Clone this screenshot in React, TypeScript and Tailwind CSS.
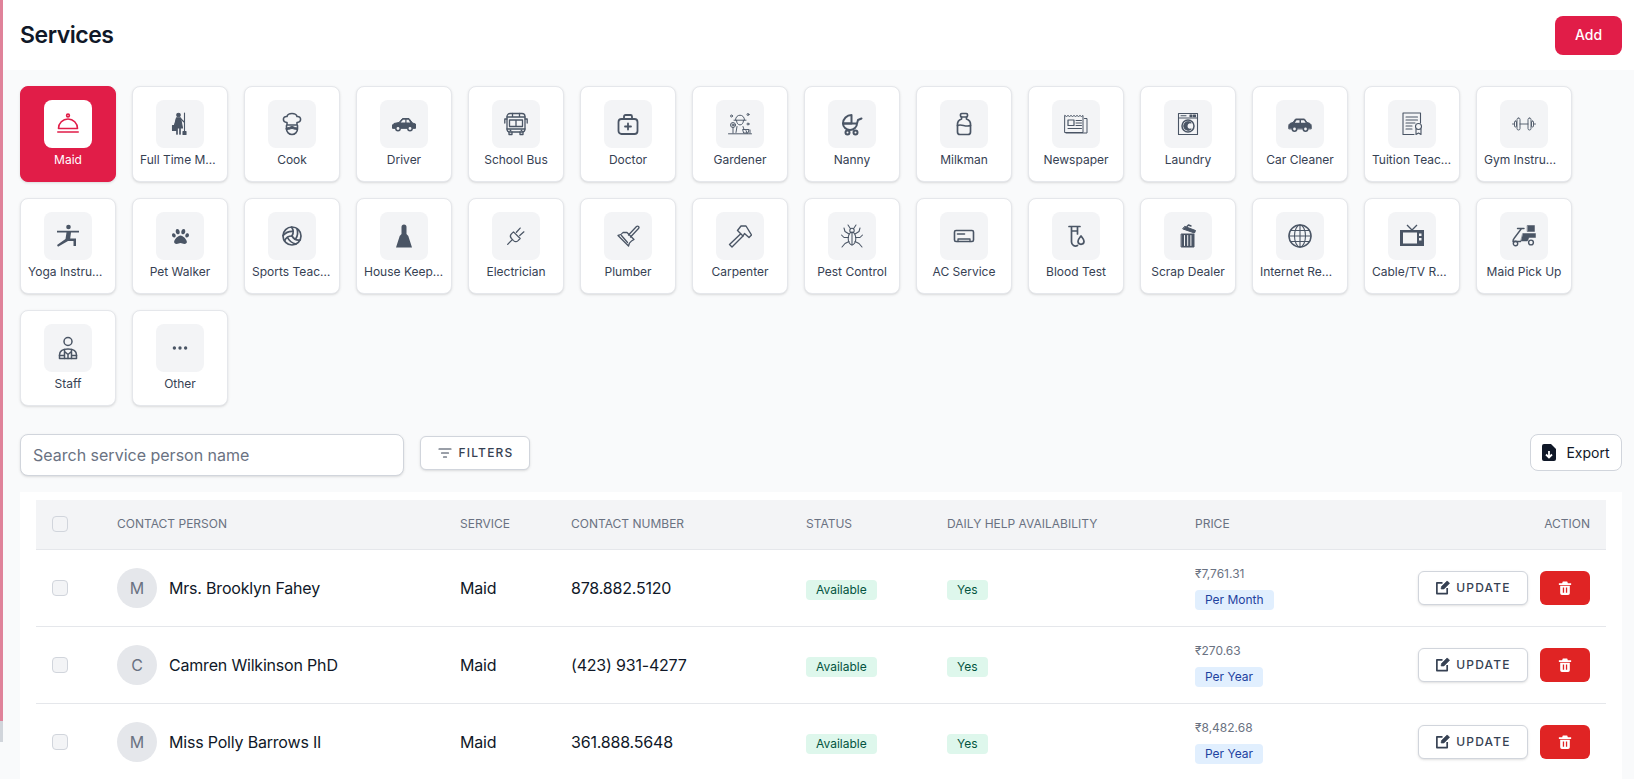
import React from "react";
import clsx from "clsx";
import { BsThreeDots } from "react-icons/bs";
import { FaPaw } from "react-icons/fa";
import { TbBallVolleyball } from "react-icons/tb";

type IconProps = { children: React.ReactNode; stroke?: number };

// hand-drawn icons, all on a 24 box
const Svg = ({ children, stroke = 1.5 }: IconProps) => (
  <svg width="24" height="24" viewBox="0 0 24 24" fill="none" stroke="currentColor" strokeWidth={stroke} strokeLinecap="round" strokeLinejoin="round">
    {children}
  </svg>
);

const Cloche = () => (
  <Svg stroke={1.6}>
    <circle cx="12" cy="3.500" r="1.400" />
    <path d="M2.500 16.500a9.500 9.500 0 0 1 19 0z" />
    <path d="M1.800 20h20.400" />
  </Svg>
);

const MaidFigure = () => (
  <Svg stroke={1.1}>
    <circle cx="10.500" cy="3" r="1.800" fill="currentColor" />
    <path d="M8.500 5.800h4L14.500 16h-8z" fill="currentColor" />
    <path d="M9 16v6M12 16v6" strokeWidth="1.700" />
    <path d="M8.500 6.500L6.500 13M12.500 6.500L16 10M16.500 1v18" />
    <rect x="4.500" y="13.500" width="4" height="5" fill="currentColor" />
    <path d="M15 19.500h3V22.500h-3z" fill="currentColor" />
  </Svg>
);

const ChefFace = () => (
  <Svg stroke={1.600}>
    <path d="M7 10.500C2 10 2.500 4 7 4.500 8 .5 16 .5 17 4.500c4.500-.5 5 5.500 0 6v2.500H7z" />
    <path d="M6.500 13.500V17a5.500 5.500 0 0 0 11 0v-3.500" />
    <path d="M6.500 16c2.500 0 4-1.500 5.500-1.500s3 1.500 5.500 1.500v1.500c-3.500 0-4-1-5.500-1s-2 1-5.500 1z" fill="currentColor" strokeWidth="1" />
  </Svg>
);

const CarWindow = () => (
  <Svg stroke={1}>
    <path d="M.5 16v-3l1.500-1.500 5-1 3.500-4h6.500l3.500 4.500 3 1V16z" fill="currentColor" />
    <path d="M11 7.800h2.300v2.700H8.600zM14.500 7.800h2l1.700 2.700h-3.700z" fill="#f3f4f6" stroke="none" />
    <circle cx="6" cy="16.500" r="2.200" fill="#f3f4f6" strokeWidth="1.500" />
    <circle cx="18" cy="16.500" r="2.200" fill="#f3f4f6" strokeWidth="1.500" />
  </Svg>
);

const SchoolBus = () => (
  <Svg stroke={1.300}>
    <rect x="3" y="1.500" width="18" height="18.500" rx="3" />
    <path d="M8.500 1.500V5h7V1.500M3 5h18M5.500 8h13v6.500h-13zM3 17h18M12 8v6.500" />
    <path d="M5 20v2.500h3V20M16 20v2.500h3V20M3 7H.8v4M21 7h2.200v4" />
    <path d="M6.500 18.500h.01M17.500 18.500h.01" strokeWidth="1.800" />
  </Svg>
);

const MedicalCase = () => (
  <Svg stroke={1.800}>
    <rect x="2.500" y="7" width="19" height="15" rx="3" />
    <path d="M8 7V4.500A1.500 1.500 0 0 1 9.500 3h5A1.500 1.500 0 0 1 16 4.500V7M12 11.500v6M9 14.500h6" />
  </Svg>
);

const Gardener = () => (
  <Svg stroke={0.95}>
    <path d="M7.500 8c0-6.500 9-6.500 9 0M6 8.200h12" />
    <path d="M8.500 8.500c0 6 7 6 7 0" />
    <path d="M9 14.500l-1 6M15 14.500l1 3" />
    <circle cx="5" cy="13" r="2.500" />
    <circle cx="5" cy="13" r="1" />
    <path d="M5 15.500v5.500M15 17.500h6l-1 3.500h-4zM.5 21.800h23" />
    <circle cx="3.500" cy="4" r="1" />
    <circle cx="20" cy="2.500" r="1" />
    <circle cx="20" cy="12" r="1" />
    <path d="M19 21l-1-2.500M22 21v-3" />
  </Svg>
);

const Stroller = () => (
  <Svg stroke={2}>
    <path d="M3 11.500A8.500 8.500 0 0 1 11.500 3v8.500z" />
    <path d="M3 11.500h14a7 6.500 0 0 1-14 0zM17 11.500l1-3.500 3.500-1.500" />
    <circle cx="7.500" cy="20.500" r="2" />
    <circle cx="15.500" cy="20.500" r="2" />
  </Svg>
);

const MilkBottle = () => (
  <Svg stroke={1.700}>
    <rect x="8.500" y="1.500" width="7" height="3.500" rx="1.200" />
    <path d="M9.500 5v2C7 8 5.500 9.500 5.500 12v8a2.500 2.500 0 0 0 2.500 2.500h8a2.500 2.500 0 0 0 2.500-2.500v-8c0-2.500-1.500-4-4-5V5" />
    <path d="M5.500 13.500c4-2 8 2 13 0" />
  </Svg>
);

const NewspaperIcon = () => (
  <Svg stroke={1}>
    <path d="M1 3.500l1.500 1 1.500-1 1.500 1 1.500-1 1.500 1 1.500-1 1.500 1 1.500-1 1.500 1 1.500-1 1.500 1 1.500-1V20.500H1z" />
    <path d="M20.500 6.500H23v14.500H2" />
    <rect x="4" y="8" width="6" height="5.500" strokeWidth="1.200" />
    <path d="M12 8.500h5.500M12 11h5.500M12 13.500h5.500M4 16.500h13.500" />
  </Svg>
);

const Washer = () => (
  <Svg stroke={1.100}>
    <rect x="2.500" y="1.500" width="19" height="21" />
    <path d="M2.500 6h19M5 3.800h5" />
    <rect x="14" y="3" width="2" height="1.600" fill="currentColor" />
    <rect x="17.500" y="3" width="2" height="1.600" fill="currentColor" />
    <circle cx="12" cy="14" r="6" strokeWidth="1.500" />
    <path d="M15 11a4.200 4.200 0 1 0 0 6 2.800 2.800 0 0 1-4-3 3 3 0 0 1 4-3z" fill="currentColor" />
  </Svg>
);

const CarSmall = () => (
  <Svg stroke={1}>
    <path d="M.8 16.500v-3c0-1.500 1.500-2.500 4.200-3l2.500-3.500h9l2.500 3.500c2.700.5 4.200 1.500 4.200 3v3z" fill="currentColor" />
    <path d="M8.500 8.300h3v2.400H6.800zM13 8.300h3l1.700 2.400H13z" fill="#f3f4f6" stroke="none" />
    <circle cx="6.500" cy="17" r="2.200" fill="#f3f4f6" strokeWidth="1.600" />
    <circle cx="17.500" cy="17" r="2.200" fill="#f3f4f6" strokeWidth="1.600" />
  </Svg>
);

const Certificate = () => (
  <Svg stroke={1.100}>
    <path d="M14 22.500H3V1h17.500v10" />
    <path d="M6 5h11.500M6 8h11.500M6 11h9M6 14h6M6 17h6" />
    <circle cx="18.500" cy="14.500" r="3" />
    <path d="M16 17v5.500l2.500-1.500 2.500 1.500V17" />
  </Svg>
);

const Barbell = () => (
  <Svg stroke={0.9}>
    <path d="M8 12h8M.5 12H2M22 12h1.500" />
    <rect x="2.500" y="9" width="2" height="6" rx="1" />
    <rect x="5" y="6" width="3" height="12" rx="1.500" />
    <rect x="16" y="6" width="3" height="12" rx="1.500" />
    <rect x="19.500" y="9" width="2" height="6" rx="1" />
  </Svg>
);

const Warrior = () => (
  <svg width="24" height="24" viewBox="0 0 24 24" fill="currentColor">
    <circle cx="12.500" cy="3" r="2.300" />
    <path d="M1 6.800h22v1.800h-8l-.8 6H20V22h-2.500v-5H12L2 22.800l-1-1.800 8.500-6 1-6.400H1z" />
  </svg>
);

const Broom = () => (
  <svg width="24" height="24" viewBox="0 0 24 24" fill="currentColor">
    <path d="M9.500 3a2.500 2.500 0 0 1 5 0v7l1.800 2L20 23.500H4L7.700 12l1.800-2z" />
  </svg>
);

const PlugIcon = () => (
  <svg width="20" height="20" viewBox="0 0 24 24" fill="none" stroke="currentColor" strokeWidth="1.500" strokeLinecap="round" strokeLinejoin="round">
    <path d="M9 7l8 8-2.500 2.500a4 4 0 0 1-5.500 0L6.500 15a4 4 0 0 1 0-5.500z" />
    <path d="M7 17l-5 5M12.500 7.500L17 2.500M16.500 11.500L21.500 7" />
  </svg>
);

const Plunger = () => (
  <Svg stroke={1.300}>
    <path d="M12.500 11l8-8.500a1.400 1.400 0 0 1 2 2l-8 8.500" />
    <path d="M11 8.500l7 7-2.500 1.500c-1.500 1-2.500 2.500-3 5L2 11.500c2.500-.5 4-1.500 5-3z" />
    <path d="M5.500 11.500l6 7" />
  </Svg>
);

const HammerOutline = () => (
  <Svg stroke={1.400}>
    <path d="M12.500 10L1.500 20.500l2.500 2.500 11-11" />
    <path d="M9.500 6.500L13 2h5l5.500 9-2.500 2.500-4.500-4-1.500 2.500-5.500-5.500z" />
  </Svg>
);

const Insect = () => (
  <Svg stroke={1.050}>
    <ellipse cx="12" cy="14.500" rx="3.800" ry="6.500" />
    <circle cx="12" cy="6.500" r="2.200" />
    <path d="M12 9v12M10.500 4.800L8 1M13.500 4.800L16 1M9 10L5 7.500l-1-3.500M15 10l4-2.500 1-3.500M8.500 13.500H4L1.500 11M15.500 13.500H20l2.500-2.500M9 17.500l-4 2-3 3.500M15 17.500l4 2 3 3.500" />
  </Svg>
);

const AcUnit = () => (
  <Svg stroke={1.600}>
    <rect x="2.500" y="6.500" width="19" height="11" rx="1.500" />
    <path d="M5.500 10h7" />
    <path d="M6 17.500v-2.500h12v2.500" strokeWidth="1.300" />
  </Svg>
);

const TestTube = () => (
  <Svg stroke={1.700}>
    <path d="M5 2.500h11M7.500 2.500V18a4 4 0 0 0 6 3.500M13.500 2.500V10M7.500 7h6" />
    <path d="M17 12c1.500 2 3 3.200 3 5.300a3 3 0 0 1-6 0c0-2.100 1.500-3.300 3-5.300z" />
  </Svg>
);

const ScrapBin = () => (
  <Svg stroke={1}>
    <path d="M5.500 10h12.500v13H5.500z" fill="currentColor" />
    <path d="M8.500 11.500v10M11.700 11.500v10M14.900 11.500v10" stroke="#f3f4f6" />
    <path d="M7 5l11.500 4 1-2.500L9 2.500z" fill="currentColor" />
    <path d="M11 2.500l1.500-1.500 2.500 1" strokeWidth="1.500" />
  </Svg>
);

const GlobeGrid = () => (
  <Svg stroke={1.100}>
    <circle cx="12" cy="12" r="11" strokeWidth="1.500" />
    <ellipse cx="12" cy="12" rx="5.500" ry="11" />
    <path d="M12 1v22M1 12h22M2.500 6.500h19M2.500 17.500h19" />
  </Svg>
);

const Television = () => (
  <svg width="24" height="24" viewBox="0 0 24 24" fill="currentColor">
    <path d="M7 1l5 5 5-5" fill="none" stroke="currentColor" strokeWidth="1.300" />
    <path fillRule="evenodd" d="M0 6h24v16H0zM3 8.500V19.500h14V8.500zM19 9.500v2.500h2.500V9.500zM19 14v2.500h2.500V14z" />
  </svg>
);

const Scooter = () => (
  <Svg stroke={1.400}>
    <path d="M15.500 1.500h7v6h-7z" fill="currentColor" strokeWidth="0.500" />
    <path d="M11 9.500h12.500v4H17l-1.500 3.500H9z" fill="currentColor" strokeWidth="0.500" />
    <path d="M5.500 4.500H12M9.500 4.500L2 14.500c-.8 1-1 2-1 3h7.500" />
    <circle cx="3.500" cy="19.500" r="2.200" />
    <circle cx="19" cy="18.500" r="2.400" fill="#f3f4f6" />
  </Svg>
);

const StaffPerson = () => (
  <Svg stroke={1.500}>
    <circle cx="12" cy="5.500" r="4" />
    <path d="M3.500 22.500v-3.500c0-4 3.500-6 8.500-6s8.500 2 8.500 6v3.500z" />
    <path d="M8.500 13.500v9M15.500 13.500v9M8.500 15.500l3.500 3 3.500-3M12 18.500v4M3.500 19.500h5M15.500 19.500h5" />
  </Svg>
);

const FilterLines = () => (
  <svg width="16" height="16" viewBox="0 0 16 16" fill="none" stroke="currentColor" strokeWidth="1.200" strokeLinecap="round">
    <path d="M2 4h12M4.500 8h7M6.500 12h3" />
  </svg>
);

const ExportDoc = () => (
  <svg width="14" height="17" viewBox="0 0 14 17" className="text-gray-900">
    <path d="M2 0h7l5 5v10a2 2 0 0 1-2 2H2a2 2 0 0 1-2-2V2a2 2 0 0 1 2-2z" fill="currentColor" />
    <path d="M7 7v6M4 10.500l3 3 3-3" fill="none" stroke="#fff" strokeWidth="1.800" />
  </svg>
);

const EditSquare = () => (
  <svg width="15" height="15" viewBox="0 0 16 16" fill="none" stroke="currentColor" strokeWidth="1.800" strokeLinejoin="round">
    <path d="M8 3H2v11.500h11V8.500" />
    <path d="M6.500 9.500L7 7l6-6 2.500 2.500-6 6z" fill="currentColor" strokeWidth="0.800" />
  </svg>
);

const BinFilled = () => (
  <svg width="14" height="14" viewBox="0 0 16 16" fill="currentColor">
    <path fillRule="evenodd" d="M5.500 .5h5L11.300 2.500H15V4.500H1V2.500h3.700zM2.500 5.500h11V14a2 2 0 0 1-2 2h-7a2 2 0 0 1-2-2zM5.500 7.500v6h1.500v-6zM9 7.500v6h1.500v-6z" />
  </svg>
);

const services: { name: string; icon: React.ReactNode }[] = [
  { name: "Maid", icon: <Cloche /> },
  { name: "Full Time M…", icon: <MaidFigure /> },
  { name: "Cook", icon: <ChefFace /> },
  { name: "Driver", icon: <CarWindow /> },
  { name: "School Bus", icon: <SchoolBus /> },
  { name: "Doctor", icon: <MedicalCase /> },
  { name: "Gardener", icon: <Gardener /> },
  { name: "Nanny", icon: <Stroller /> },
  { name: "Milkman", icon: <MilkBottle /> },
  { name: "Newspaper", icon: <NewspaperIcon /> },
  { name: "Laundry", icon: <Washer /> },
  { name: "Car Cleaner", icon: <CarSmall /> },
  { name: "Tuition Teac…", icon: <Certificate /> },
  { name: "Gym Instru…", icon: <Barbell /> },
  { name: "Yoga Instru…", icon: <Warrior /> },
  { name: "Pet Walker", icon: <FaPaw size={17} /> },
  { name: "Sports Teac…", icon: <TbBallVolleyball size={24} strokeWidth={1.700} /> },
  { name: "House Keep…", icon: <Broom /> },
  { name: "Electrician", icon: <PlugIcon /> },
  { name: "Plumber", icon: <Plunger /> },
  { name: "Carpenter", icon: <HammerOutline /> },
  { name: "Pest Control", icon: <Insect /> },
  { name: "AC Service", icon: <AcUnit /> },
  { name: "Blood Test", icon: <TestTube /> },
  { name: "Scrap Dealer", icon: <ScrapBin /> },
  { name: "Internet Re…", icon: <GlobeGrid /> },
  { name: "Cable/TV R…", icon: <Television /> },
  { name: "Maid Pick Up", icon: <Scooter /> },
  { name: "Staff", icon: <StaffPerson /> },
  { name: "Other", icon: <BsThreeDots size={18} /> },
];

const people = [
  { name: "Mrs. Brooklyn Fahey", phone: "878.882.5120", price: "₹7,761.31", per: "Per Month" },
  { name: "Camren Wilkinson PhD", phone: "(423) 931-4277", price: "₹270.63", per: "Per Year" },
  { name: "Miss Polly Barrows II", phone: "361.888.5648", price: "₹8,482.68", per: "Per Year" },
];

const ServiceCard = ({ name, icon, active }: { name: string; icon: React.ReactNode; active: boolean }) => (
  <div
    className={clsx(
      "w-24 h-24 rounded-lg border shadow-sm flex flex-col items-center pt-[13px]",
      active ? "bg-[#e11d48] border-[#e11d48]" : "bg-white border-gray-200",
    )}
  >
    <div
      className={clsx(
        "w-12 h-12 shrink-0 rounded-lg flex items-center justify-center",
        active ? "bg-white text-[#e11d48]" : "bg-gray-100 text-gray-600",
      )}
    >
      {icon}
    </div>
    {/* shortened names start at the left edge, the rest are centred */}
    <div
      className={clsx(
        "mt-0.5 w-full whitespace-nowrap text-xs leading-5",
        name.endsWith("…") ? "pl-[7px]" : "text-center",
        active ? "text-white" : "text-gray-700",
      )}
    >
      {name}
    </div>
  </div>
);

const Checkbox = () => <div className="w-4 h-4 rounded border border-gray-300 bg-gray-100" />;

const Badge = ({ children, blue }: { children: React.ReactNode; blue?: boolean }) => (
  <span
    className={clsx(
      "inline-block rounded px-2.5 py-0.5 text-xs leading-4",
      blue ? "bg-[#e1effe] text-[#1e429f]" : "bg-[#def7ec] text-[#03543f]",
    )}
  >
    {children}
  </span>
);

const App = () => {
  return (
    <div className="relative h-[779px] overflow-hidden bg-gray-50 pl-[3px] font-['Inter',sans-serif]">
      {/* sliver of the sidebar behind the page */}
      <div className="absolute left-0 top-0 w-[3px] h-[721px] bg-[#e0829a]" />
      <div className="absolute left-0 top-[721px] w-[3px] h-[21px] bg-[#d1d5db]" />

      <header className="h-[70px] bg-white flex items-center justify-between pl-[17px] pr-3">
        <h1 className="text-[23px] tracking-[-0.02em] font-semibold text-gray-900">Services</h1>
        <button className="w-[67px] h-[39px] rounded-lg bg-[#e11d48] text-sm font-medium text-white">Add</button>
      </header>

      <div className="pt-4 pl-[17px] pr-3">
        <div className="flex flex-wrap gap-4">
          {services.map((s, i) => (
            <ServiceCard key={s.name} name={s.name} icon={s.icon} active={i === 0} />
          ))}
        </div>

        <div className="mt-7 flex items-start">
          <input
            placeholder="Search service person name"
            className="w-[384px] h-[42px] rounded-lg border border-gray-300 bg-white px-3 text-base text-gray-900 placeholder:text-gray-500 shadow-sm"
          />
          <button className="ml-4 mt-0.5 w-[110px] h-[34px] rounded-md border border-gray-300 bg-white shadow-sm flex items-center justify-center gap-1.5 text-xs font-medium tracking-widest text-gray-700">
            <FilterLines />
            FILTERS
          </button>
          <button className="ml-auto w-[92px] h-[37px] rounded-lg border border-gray-300 bg-white flex items-center justify-center gap-2.5 text-sm text-gray-900">
            <ExportDoc />
            Export
          </button>
        </div>

        <div className="mt-4 bg-white px-4 pt-2">
          <table className="w-full table-fixed border-collapse">
            <colgroup>
              <col className="w-[65px]" />
              <col className="w-[343px]" />
              <col className="w-[111px]" />
              <col className="w-[235px]" />
              <col className="w-[141px]" />
              <col className="w-[248px]" />
              <col />
            </colgroup>
            <thead>
              <tr className="h-[49px] bg-gray-100 border-b border-gray-200 text-left text-xs font-normal uppercase text-gray-500">
                <th className="pl-4 font-normal"><Checkbox /></th>
                <th className="pl-4 font-normal">Contact Person</th>
                <th className="pl-4 font-normal">Service</th>
                <th className="pl-4 font-normal">Contact Number</th>
                <th className="pl-4 font-normal">Status</th>
                <th className="pl-4 font-normal">Daily Help Availability</th>
                <th className="pl-4 font-normal">Price</th>
                <th className="pr-4 font-normal text-right">Action</th>
              </tr>
            </thead>
            <tbody>
              {people.map((p) => (
                <tr key={p.name} className="h-[77px] border-b border-gray-200 text-base tracking-[-0.012em] text-gray-900">
                  <td className="pl-4"><Checkbox /></td>
                  <td className="pl-4">
                    <div className="flex items-center gap-3">
                      <div className="w-10 h-10 rounded-full bg-gray-200 flex items-center justify-center text-gray-500">{p.name[0]}</div>
                      {p.name}
                    </div>
                  </td>
                  <td className="pl-4">Maid</td>
                  <td className="pl-4">{p.phone}</td>
                  <td className="pl-4 tracking-normal"><Badge>Available</Badge></td>
                  <td className="pl-4 tracking-normal"><Badge>Yes</Badge></td>
                  <td className="pl-4 tracking-normal">
                    <div className="pb-0.5">
                      <div className="text-xs leading-5 text-gray-500">{p.price}</div>
                      <div className="mt-1.5 leading-none"><Badge blue>{p.per}</Badge></div>
                    </div>
                  </td>
                  <td className="pr-4 tracking-normal">
                    <div className="flex justify-end gap-3">
                      <button className="w-[110px] h-[34px] rounded-md border border-gray-300 bg-white shadow-sm flex items-center justify-center gap-1.5 text-xs font-medium tracking-widest text-gray-700">
                        <EditSquare />
                        UPDATE
                      </button>
                      <button className="w-[50px] h-[34px] rounded-md bg-[#e02424] text-white flex items-center justify-center">
                        <BinFilled />
                      </button>
                    </div>
                  </td>
                </tr>
              ))}
            </tbody>
          </table>
        </div>
      </div>
    </div>
  );
};

export default App;
